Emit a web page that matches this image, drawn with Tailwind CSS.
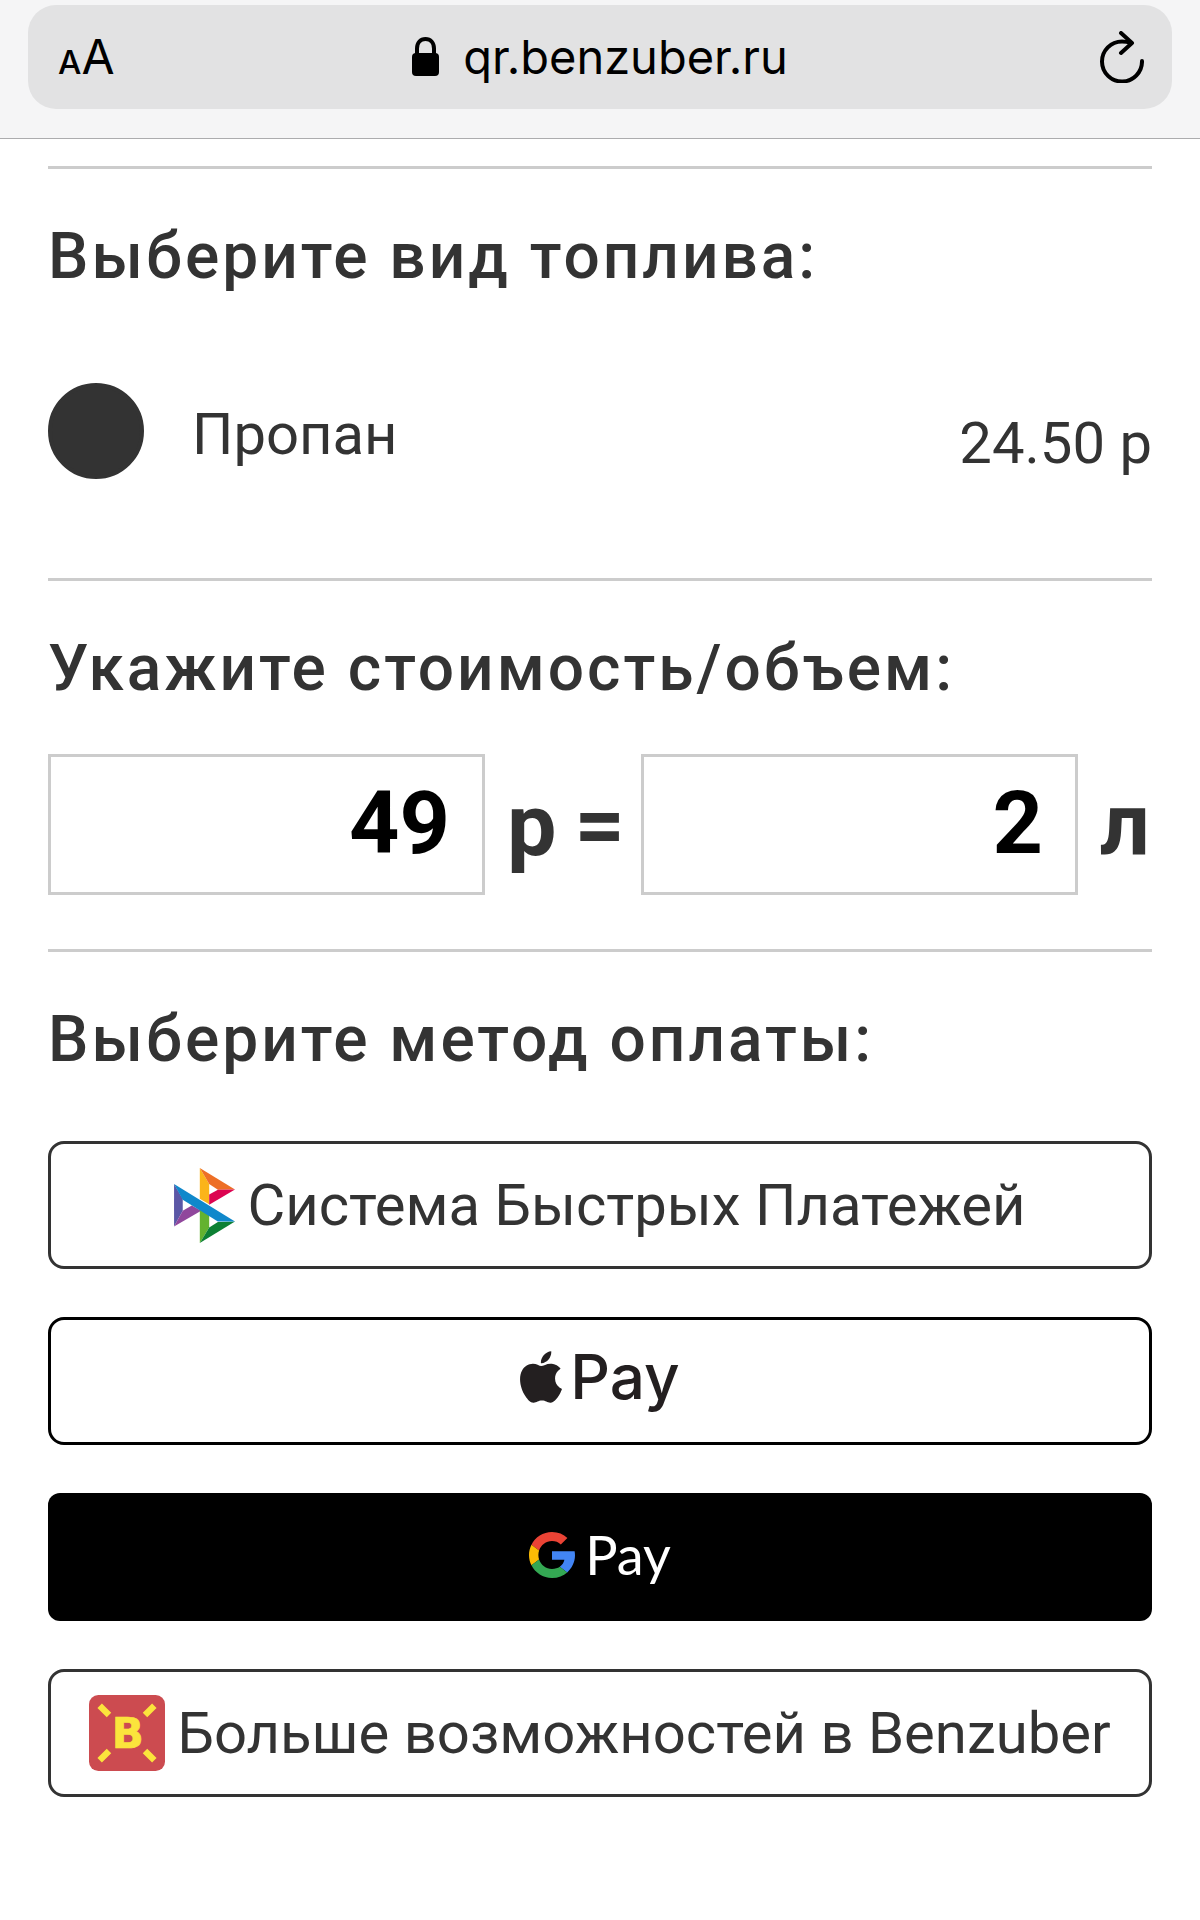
<!DOCTYPE html>
<html lang="ru">
<head>
  <meta charset="UTF-8" />
  <meta name="viewport" content="width=device-width, initial-scale=1.0" />
  <title>Benzuber</title>
  <script src="https://cdn.jsdelivr.net/npm/@tailwindcss/browser@4"></script>
</head>
<body class="min-h-screen bg-white text-[#333333] font-['Roboto',sans-serif]">

<!-- Address bar -->
<header class="border-b border-[#acacae] bg-[#f5f5f6] px-7 pt-[5px] pb-[29px]">
  <div class="flex h-[104px] items-center justify-between rounded-[28px] bg-[#e2e2e3] px-7 font-['Inter',sans-serif] text-black">
    <button aria-label="Размер текста" class="flex w-16 items-baseline pt-1 pl-0.5"><span class="text-[33px] leading-[48px] font-medium">A</span><span class="text-5xl leading-[48px]">A</span></button>
    <div class="flex items-center gap-6">
      <svg class="h-[40px] w-[27px]" viewBox="0 0 27 40" fill="none">
        <rect x="0" y="16" width="27" height="23" rx="4" fill="#000" />
        <path d="M5 18V11.500C5 5.500 8.500 2 13.500 2S22 5.500 22 11.500V18" stroke="#000" stroke-width="4" />
      </svg>
      <span class="text-[47px] leading-[56px]">qr.benzuber.ru</span>
    </div>
    <button aria-label="Обновить" class="flex w-16 justify-end">
      <svg class="h-[52px] w-[44px]" viewBox="0 0 44 52" fill="none" stroke="#000" stroke-width="4" stroke-linecap="round" stroke-linejoin="round">
        <path d="M42 30A20 20 0 1 1 22 10.500C25 10.500 28 11 31 12" />
        <path d="M21 2L32 12L21 22" />
      </svg>
    </button>
  </div>
</header>

<main class="px-12 pt-[27px] pb-12">

  <!-- Fuel -->
  <section class="border-t-3 border-[#cccccc] pt-12 pb-[99px]">
    <h2 class="text-[64px] leading-[80px] font-medium tracking-[3px]">Выберите вид топлива:</h2>
    <div class="mt-[86px] flex items-end justify-between text-[58px]">
      <div class="flex items-end gap-12">
        <input type="radio" id="fuel-propane" name="fuel" checked class="size-24 appearance-none rounded-full border-4 border-[#333333] checked:bg-[#333333]" />
        <label for="fuel-propane" class="leading-[90px]">Пропан</label>
      </div>
      <span class="leading-[72px]">24.50 р</span>
    </div>
  </section>

  <!-- Amount -->
  <section class="border-t-3 border-[#cccccc] pt-12 pb-[54px]">
    <h2 class="text-[64px] leading-[80px] font-medium tracking-[3px]">Укажите стоимость/объем:</h2>
    <div class="mt-[45px] flex items-center text-[88px] leading-[141px] font-bold">
      <input type="text" id="cost" inputmode="decimal" value="49" class="h-[141px] min-w-0 flex-1 border-3 border-[#cccccc] px-8 pb-1 text-right text-black" />
      <div class="flex w-[156px] gap-[18px] pl-[22px]"><label for="cost">р</label><span>=</span></div>
      <input type="text" id="volume" inputmode="decimal" value="2" class="h-[141px] min-w-0 flex-1 border-3 border-[#cccccc] px-8 pb-1 text-right text-black" />
      <label for="volume" class="w-[74px] pr-0.5 text-right">л</label>
    </div>
  </section>

  <!-- Payment -->
  <section class="border-t-3 border-[#cccccc] pt-12">
    <h2 class="text-[64px] leading-[80px] font-medium tracking-[3px]">Выберите метод оплаты:</h2>
    <div class="mt-[61px] flex flex-col gap-12 text-[58px] leading-[72px]">
      <button class="flex h-32 items-center justify-center gap-3 rounded-2xl border-3 border-[#333333]">
        <svg class="h-[75px] w-[61px]" viewBox="75 84 182 224">
          <path fill="#5b57a6" d="M75 132L101 176V212L75 259z" />
          <path fill="#90479c" d="M75 259L101 212L128 196L156 212z" />
          <path fill="#fbb41a" d="M152 84L180 132V192L152 176z" />
          <path fill="#ed6f26" d="M152 84L257 148L206 149L180 132z" />
          <path fill="#dc0451" d="M257 148L180 194V163L206 149z" />
          <path fill="#63b22f" d="M152 205L180 217V262L152 308z" />
          <path fill="#0d8034" d="M152 308L180 262L206 245L257 244z" />
          <path fill="#1088cb" d="M75 132L257 244H206L101 179z" />
        </svg>
        <span>Система Быстрых Платежей</span>
      </button>
      <button class="flex h-32 items-center justify-center gap-2 rounded-2xl border-3 border-black pb-2 font-['Inter',sans-serif] text-[62px] font-medium text-[#231f20]">
        <svg class="h-[52px] w-[42px]" viewBox="2.200 0 19.600 24" fill="currentColor">
          <path d="M12.152 6.896c-.948 0-2.415-1.078-3.960-1.040-2.040.027-3.910 1.183-4.961 3.014-2.117 3.675-.546 9.103 1.519 12.090 1.013 1.454 2.208 3.090 3.792 3.039 1.520-.065 2.090-.987 3.935-.987 1.831 0 2.350.987 3.960.948 1.637-.026 2.676-1.480 3.676-2.948 1.156-1.688 1.636-3.325 1.662-3.415-.039-.013-3.182-1.221-3.220-4.857-.026-3.040 2.480-4.494 2.597-4.559-1.429-2.090-3.623-2.324-4.390-2.376-2-.156-3.675 1.090-4.610 1.090zM15.530 3.830c.843-1.012 1.400-2.427 1.245-3.830-1.207.052-2.662.805-3.532 1.818-.780.896-1.454 2.338-1.273 3.714 1.338.104 2.715-.688 3.559-1.701" />
        </svg>
        <span>Pay</span>
      </button>
      <button class="flex h-32 items-center justify-center gap-2.5 rounded-xl bg-black pb-1 font-['Lato',sans-serif] text-[54px] text-white">
        <svg class="size-[46px]" viewBox="0 0 48 48">
          <path fill="#EA4335" d="M24 9.5c3.54 0 6.71 1.22 9.21 3.6l6.85-6.85C35.9 2.38 30.47 0 24 0 14.62 0 6.51 5.38 2.56 13.22l7.98 6.19C12.43 13.72 17.74 9.5 24 9.5z" />
          <path fill="#4285F4" d="M48 24.550c0-1.570-.150-3.090-.380-4.550H24v9.020h12.940c-.580 2.960-2.260 5.480-4.780 7.180l7.730 6c4.510-4.180 8.110-10.360 8.110-17.650z" />
          <path fill="#FBBC05" d="M10.53 28.59c-.48-1.45-.76-2.99-.76-4.59s.27-3.14.76-4.59l-7.98-6.19C.92 16.46 0 20.12 0 24c0 3.88.92 7.54 2.56 10.78l7.97-6.19z" />
          <path fill="#34A853" d="M24 48c6.48 0 11.93-2.13 15.89-5.81l-7.73-6c-2.15 1.45-4.92 2.3-8.16 2.3-6.26 0-11.57-4.22-13.47-9.91l-7.98 6.19C6.51 42.62 14.62 48 24 48z" />
        </svg>
        <span>Pay</span>
      </button>
      <button class="flex h-32 items-center justify-center gap-3 rounded-2xl border-3 border-[#333333]">
        <svg class="size-[76px]" viewBox="0 0 228 228">
          <rect width="228" height="228" rx="28" fill="#cc4b50" />
          <path d="M32 32L60 60M196 32L168 60M32 196L60 168M196 196L168 168" stroke="#fbe43c" stroke-width="19" />
          <text x="116" y="160" text-anchor="middle" font-family="DejaVu Sans" font-weight="bold" font-size="126" fill="#fbe43c" stroke="#fbe43c" stroke-width="2">B</text>
        </svg>
        <span>Больше возможностей в Benzuber</span>
      </button>
    </div>
  </section>

</main>

</body>
</html>
